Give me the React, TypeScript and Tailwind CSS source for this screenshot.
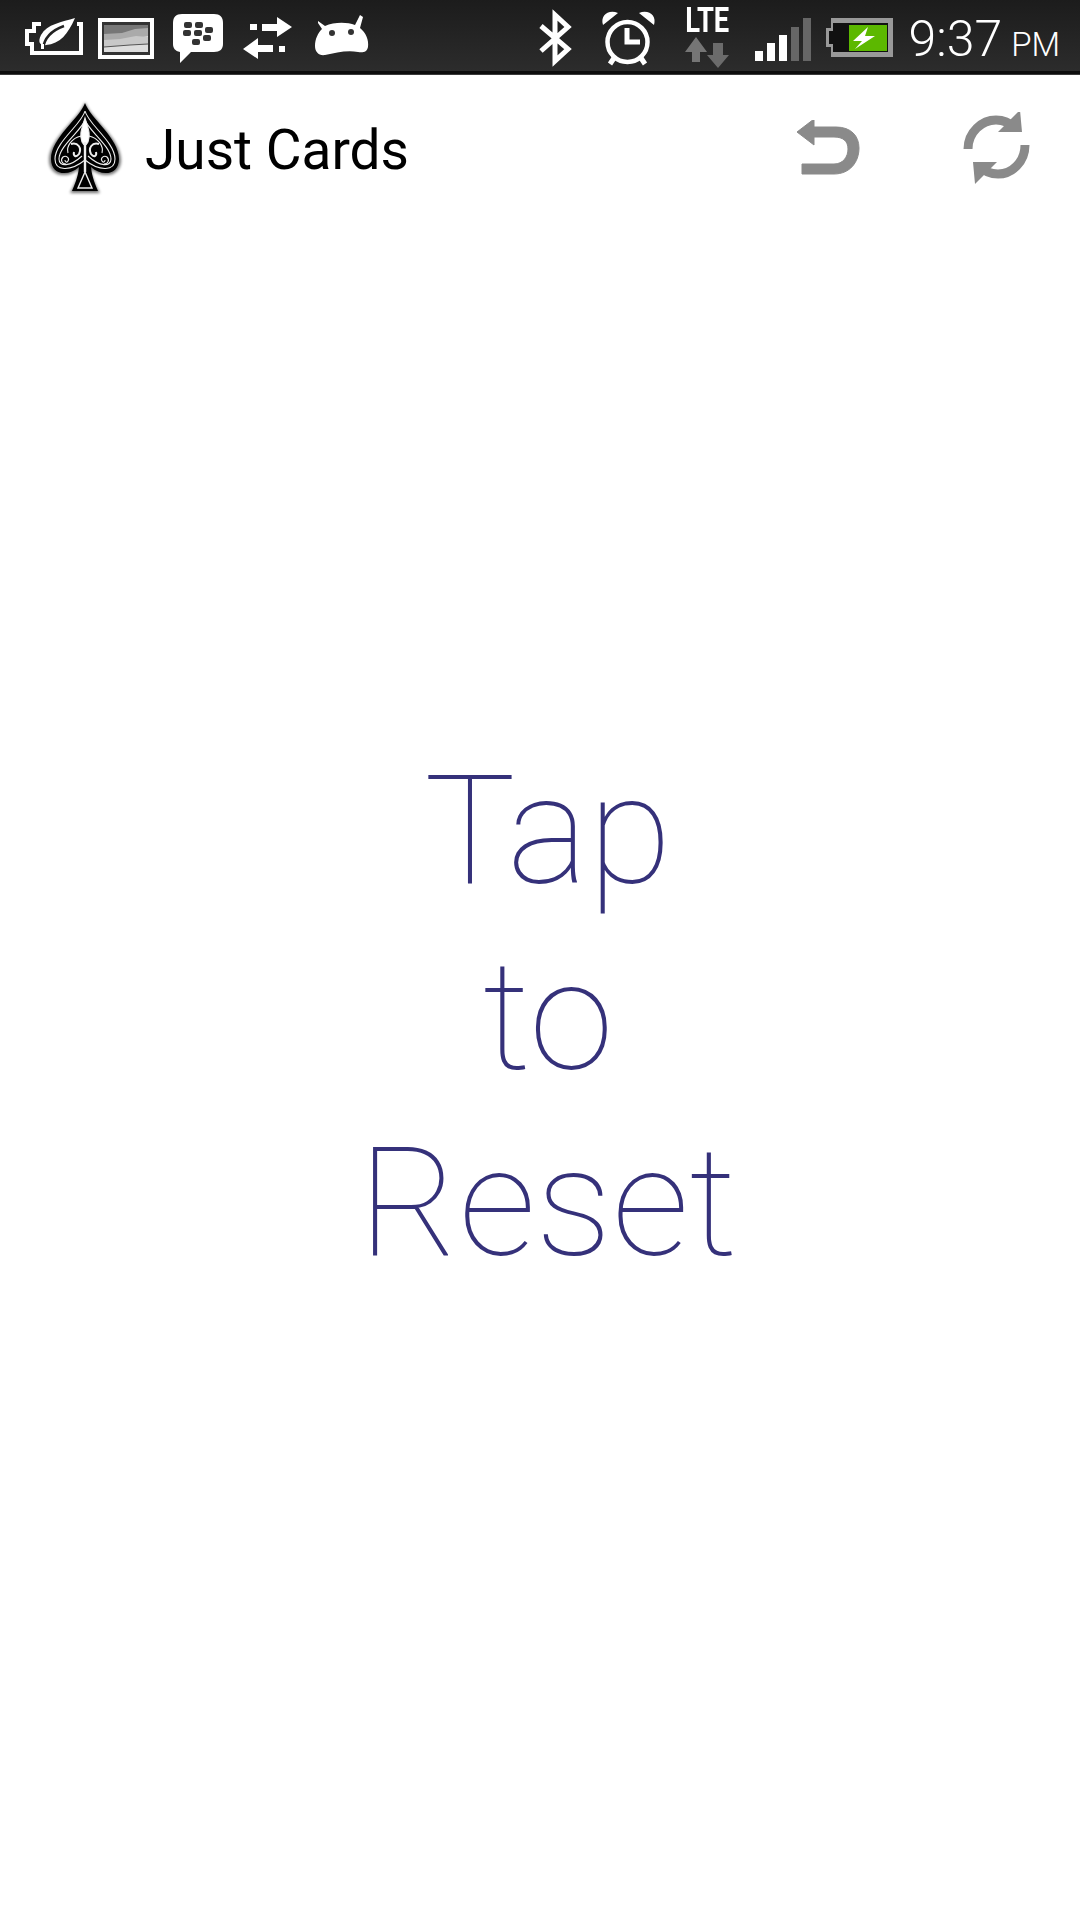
import React from "react";

// status icons all share the bar's 71px height, so their y values read straight off the screen
const BatteryLeaf = () => (
  <svg width="60" height="71" viewBox="24 0 60 71">
    <path d="M41 24H34V31H27V44H32V53H81V24H77" fill="none" stroke="#fff" strokeWidth="4" />
    <path d="M75 18C62 22 47 24 41 35C37 43 41 46 46 45C60 44 68 34 75 18Z" fill="#fff" />
    <path d="M43 49C44 39 50 31 64 26" fill="none" stroke="#222" strokeWidth="2.5" />
    <path d="M41 49L44 49L44 44L41 44Z" fill="#fff" />
  </svg>
);

const Gallery = () => (
  <svg width="58" height="71" viewBox="97 0 58 71">
    <rect x="98" y="18" width="56" height="41" fill="#fff" />
    <rect x="102" y="22" width="48" height="33" fill="#333" />
    <rect x="104" y="25" width="44" height="27" fill="#ddd" />
    <path d="M104 25H148V29L134 31L122 34H104Z" fill="#777" />
    <path d="M104 34L122 33L135 29L148 28V36L134 39L120 41L104 42Z" fill="#aaa" />
    <path d="M104 40L120 39L136 36L148 37V44L130 45L104 47Z" fill="#c8c8c8" />
    <path d="M104 47L130 45L148 44" fill="none" stroke="#555" strokeWidth="1" />
  </svg>
);

const Bbm = () => (
  <svg width="52" height="71" viewBox="172 0 52 71">
    <path d="M182 14H214C220 14 223 17 223 23V44C223 49 220 52 214 52H191L180 63V52C175 51 173 48 173 44V23C173 17 176 14 182 14Z" fill="#fff" />
    <g fill="#333">
      <rect x="184" y="22" width="8" height="6" rx="2" />
      <rect x="195" y="22" width="8" height="6" rx="2" />
      <rect x="183" y="30" width="8" height="6" rx="2" />
      <rect x="194" y="30" width="8" height="6" rx="2" />
      <rect x="205" y="27" width="8" height="6" rx="2" />
      <rect x="203" y="35" width="8" height="6" rx="2" />
      <rect x="192" y="39" width="8" height="6" rx="2" />
    </g>
  </svg>
);

const Transfer = () => (
  <svg width="50" height="71" viewBox="243 0 50 71">
    <path d="M250 24H257V30H250ZM262 24H277V17L292 27L277 37V31H262ZM279 46H285V52H279ZM273 45H258V38L243 49L258 59V52H273Z" fill="#fff" />
  </svg>
);

const AndroidHead = () => (
  <svg width="54" height="71" viewBox="315 0 54 71">
    <path d="M318 21L325 26C334 22 347 22 355 25L360 15L363 17L360 28C366 33 369 40 368 47C367 52 363 53 358 52C346 50 336 53 325 55C319 56 315 52 315 46C315 39 318 33 322 29L318 23Z" fill="#fff" />
    <circle cx="332" cy="33" r="3" fill="#333" />
    <circle cx="351" cy="32" r="3" fill="#333" />
  </svg>
);

const Bluetooth = () => (
  <svg width="36" height="71" viewBox="538 0 36 71">
    <path d="M541 26L568 49L555 61V15L568 27L541 51" fill="none" stroke="#fff" strokeWidth="5" />
  </svg>
);

const Alarm = () => (
  <svg width="60" height="71" viewBox="598 0 60 71">
    <circle cx="627.5" cy="42" r="20" fill="none" stroke="#fff" strokeWidth="4.5" />
    <path d="M603 25C600 16 608 9 618 13ZM654 25C657 16 649 9 639 13Z" fill="#fff" />
    <path d="M627 28V42H640M614 58L610 64M641 58L645 64" fill="none" stroke="#fff" strokeWidth="5" />
  </svg>
);

const DataArrows = () => (
  <svg width="50" height="37" viewBox="682 34 50 37">
    <path d="M696 37L707 52H700V62H692V52H685Z" fill="#757575" />
    <path d="M713 43H723V55H729L718 68L707 55H713Z" fill="#6b6b6b" />
  </svg>
);

const Signal = () => (
  <svg width="57" height="71" viewBox="755 0 57 71">
    <rect x="755" y="51" width="8" height="10" fill="#fff" />
    <rect x="767" y="43" width="8" height="18" fill="#fff" />
    <rect x="779" y="35" width="8" height="26" fill="#fff" />
    <rect x="791" y="27" width="8" height="34" fill="#666" />
    <rect x="803" y="18" width="8" height="43" fill="#666" />
  </svg>
);

const Battery = () => (
  <svg width="69" height="71" viewBox="825 0 69 71">
    <path d="M831 18H893V57H831V47H826V28H831Z" fill="#999" />
    <path d="M833 23H888V52H833V44H829V31H833Z" fill="#111" />
    <rect x="849" y="25" width="38" height="26" fill="#5cb800" />
    <path d="M868 27L853 41H862L855 49L875 36H865Z" fill="#fff" />
  </svg>
);

const Spade = () => (
  <svg width="80" height="100" viewBox="46 100 80 100">
    <defs>
      <filter id="soft" x="-20%" y="-20%" width="140%" height="140%">
        <feGaussianBlur stdDeviation="1.6" />
      </filter>
    </defs>
    <path d="M85 102C90 118 121 138 121 160C121 177 102 179 91 169C92 179 97 187 100 193H70C73 187 78 179 79 169C68 179 49 177 49 160C49 138 80 118 85 102Z" fill="#000" opacity="0.55" filter="url(#soft)" />
    <path d="M85 103C90 118 119 138 119 159C119 175 102 177 91 167C92 178 96 186 98 191H72C74 186 78 178 79 167C68 177 51 175 51 159C51 138 80 118 85 103Z" fill="#000" />
    <g fill="none" stroke="#eee" strokeWidth="1.1">
      <path d="M85 111C88 124 115 142 115 159C115 171 100 172 85 160C70 172 55 171 55 159C55 142 82 124 85 111Z" />
      <path d="M85 120C88 130 111 146 111 159C111 167 100 167 88 156M85 120C82 130 59 146 59 159C59 167 70 167 82 156" />
      <path d="M85 118C82 128 79 134 82 142C84 146 86 146 88 142C91 134 88 128 85 118Z" fill="#fff" />
      <path d="M85 142V172" strokeWidth="2.4" />
      <path d="M81 136C72 138 66 146 68 153M89 136C98 138 104 146 102 153" />
      <path d="M71 144C78 142 82 148 79 154C76 158 73 156 74 152" strokeWidth="2" />
      <path d="M99 144C92 142 88 148 91 154C94 158 97 156 96 152" strokeWidth="2" />
      <path d="M66 164C62 164 60 160 63 157C66 155 70 158 68 161C67 163 65 162 65 160" />
      <path d="M104 164C108 164 110 160 107 157C104 155 100 158 102 161C103 163 105 162 105 160" />
      <path d="M85 172L78 188H92Z" strokeWidth="1.4" />
    </g>
  </svg>
);

const Undo = () => (
  <svg width="66" height="60" viewBox="795 120 66 60" className="block">
    <path d="M797 132L814 119V127H836C851 127 859 136 859 148C859 162 850 174 834 174H802V164H834C843 164 848 157 848 149C848 141 843 137 834 137H814V145Z" fill="#8a8a8a" stroke="#8a8a8a" strokeWidth="1" />
  </svg>
);

const Refresh = () => (
  <svg width="72" height="76" viewBox="962 112 72 76" className="block">
    <g fill="none" stroke="#8a8a8a" strokeWidth="9">
      <path d="M968 149C968 132 982 120 996 120C1004 120 1010 123 1015 128" />
      <path d="M1025 145C1025 162 1012 174 998 174C990 174 984 171 979 166" />
    </g>
    <path d="M1020 110L1022 132L998 132Z" fill="#8a8a8a" />
    <path d="M975 184L973 162L997 162Z" fill="#8a8a8a" />
  </svg>
);

export default function App() {
  return (
    <div className="min-h-[1920px] w-[1080px] bg-white font-['Roboto',sans-serif]">
      <div className="flex h-[75px] flex-col">
        <div className="flex h-[71px] justify-between bg-gradient-to-b from-[#1c1c1c] to-[#2c2c2c] pl-6 pr-[20px] text-white">
          <div className="flex">
            <BatteryLeaf />
            <div className="ml-[13px]">
              <Gallery />
            </div>
            <div className="ml-[17px]">
              <Bbm />
            </div>
            <div className="ml-[19px]">
              <Transfer />
            </div>
            <div className="ml-[22px]">
              <AndroidHead />
            </div>
          </div>
          <div className="flex">
            <Bluetooth />
            <div className="ml-[24px]">
              <Alarm />
            </div>
            <div className="ml-[24px] flex w-[50px] flex-col items-center">
              <span className="h-[34px] scale-x-[0.78] text-[35px] leading-[42px] font-bold">LTE</span>
              <DataArrows />
            </div>
            <div className="ml-[23px]">
              <Signal />
            </div>
            <div className="ml-[13px]">
              <Battery />
            </div>
            <div className="mt-[9px] ml-[14px] flex items-baseline font-light">
              <span className="text-[50px] leading-[60px]">9:37</span>
              <span className="ml-[9px] text-[33px] leading-[60px]">PM</span>
            </div>
          </div>
        </div>
        <div className="h-[3px] bg-[#0d0d0d]" />
        <div className="h-px bg-[#3a3a3a]" />
      </div>

      <header className="flex h-[150px] items-center pl-[46px] pr-[46px]">
        <Spade />
        <span className="ml-[19px] text-[55px] text-black">Just Cards</span>
        <div className="ml-auto flex items-center gap-[101px]">
          <Undo />
          <Refresh />
        </div>
      </header>

      <main className="flex flex-col items-center pt-[513px] pl-[16px] text-center text-[153px] leading-[186px] font-[140] text-[#35317a]">
        <span>Tap</span>
        <span>to</span>
        <span>Reset</span>
      </main>
    </div>
  );
}
